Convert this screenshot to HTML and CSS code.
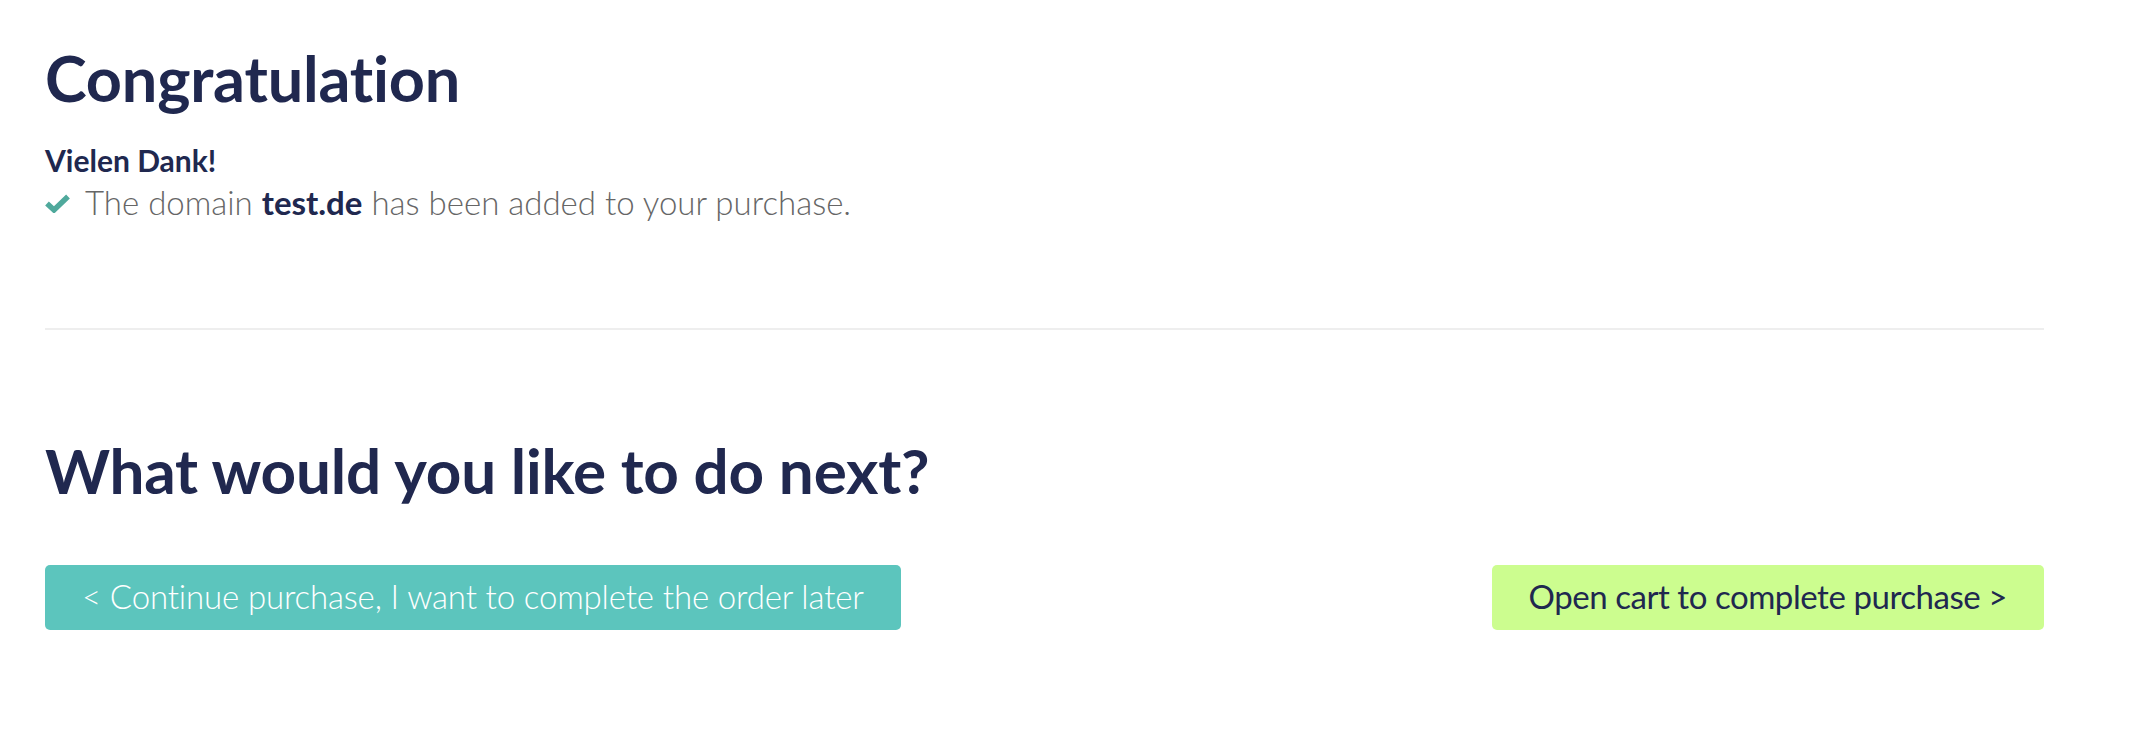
FILE: index.html
```html
<!DOCTYPE html>
<html>
<head>
    <title>Congratulation</title>
    <link rel="stylesheet" href="styles.css">
</head>
<body>
    <div class="container">
        <div class="success">
            <h1>Congratulation</h1>
            <p class="thanks">Vielen Dank!</p>
            <p class="note">
                <svg class="check" width="25" height="19" viewBox="0 0 25 19">
                    <polyline points="2,9.5 9,16 23,2.5" fill="none" stroke="#4fa99c" stroke-width="5.4"/>
                </svg>
                <span>The domain <strong>test.de</strong> has been added to your purchase.</span>
            </p>
        </div>

        <hr class="divider">

        <div class="next">
            <h2>What would you like to do next?</h2>
            <div class="actions">
                <a class="btn btn-continue" href="#">&lt; Continue purchase, I want to complete the order later</a>
                <a class="btn btn-cart" href="#">Open cart to complete purchase &gt;</a>
            </div>
        </div>
    </div>
</body>
</html>
```

FILE: styles.css
```css
body {
    margin: 0;
    font-family: Lato, "Open Sans", sans-serif;
    color: #666;
    background: #fff;
}
.container {
    width: 1999px;
    padding: 40px 0 0 45px;
}
h1, h2 {
    margin: 0;
    font-size: 62px;
    font-weight: 700;
    line-height: 1.2;
    color: #20284f;
    letter-spacing: -0.2px;
}
h1 {
    font-size: 63px;
}
.thanks {
    margin: 26px 0 0;
    font-size: 30px;
    font-weight: 700;
    line-height: 1.2;
    color: #20284f;
}
.note {
    display: flex;
    align-items: center;
    gap: 15px;
    margin: 5px 0 0;
    font-size: 33px;
    font-weight: 300;
    line-height: 1.2;
}
.note strong {
    font-weight: 700;
    color: #20284f;
}
.check {
    flex-shrink: 0;
    margin-top: 2px;
}
.divider {
    margin: 106px 0 0;
    border: none;
    border-top: 2px solid #eeeeee;
}
.next {
    padding-top: 103px;
}
.actions {
    display: flex;
    justify-content: space-between;
    margin-top: 57px;
}
.btn {
    display: flex;
    align-items: center;
    height: 65px;
    padding: 0 37px;
    box-sizing: border-box;
    border-radius: 5px;
    font-size: 33px;
    font-weight: 300;
    line-height: 1.2;
    letter-spacing: -0.15px;
    text-decoration: none;
}
.btn-continue {
    background-color: #5cc5bd;
    color: #fff;
}
.btn-cart {
    background-color: #ccfd8f;
    color: #20284f;
    font-weight: 400;
    letter-spacing: -0.45px;
}
```
